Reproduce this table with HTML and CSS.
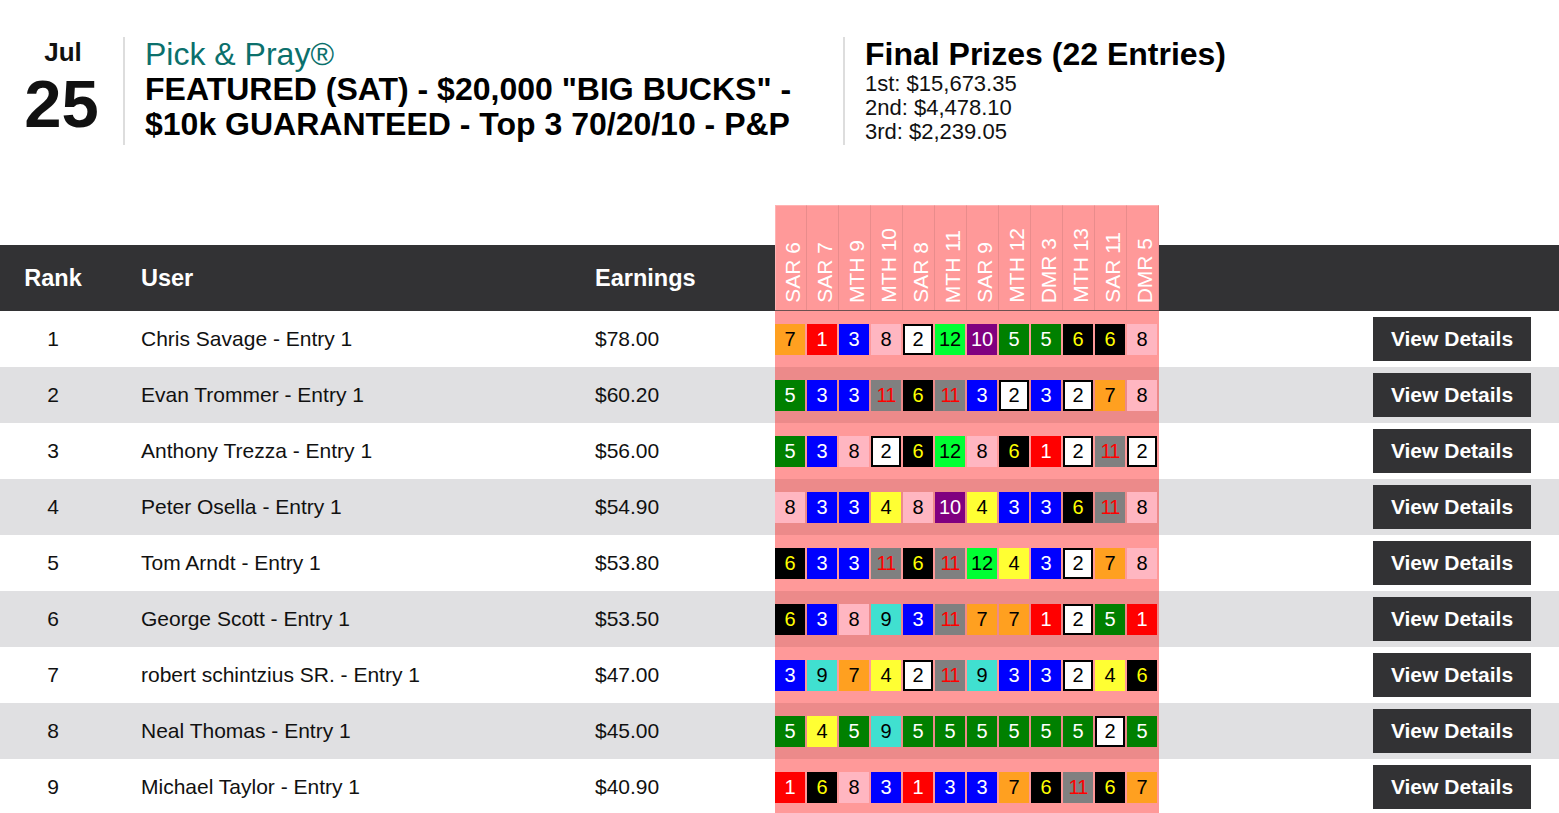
FILE: index.html
```html
<!DOCTYPE html>
<html lang="en">
<head>
<meta charset="utf-8">
<title>Pick &amp; Pray - Leaderboard</title>
<link rel="stylesheet" href="styles.css">
</head>
<body>
<header class="contest">
  <div class="date">
    <div class="month">Jul</div>
    <div class="day">25</div>
  </div>
  <div class="title-block">
    <div class="brand">Pick &amp; Pray®</div>
    <h1 class="title">FEATURED (SAT) - $20,000 "BIG BUCKS" -<br>$10k GUARANTEED - Top 3 70/20/10 - P&amp;P</h1>
  </div>
  <div class="prizes">
    <h2 class="prizes-title">Final Prizes (22 Entries)</h2>
    <div class="prize">1st: $15,673.35</div>
    <div class="prize">2nd: $4,478.10</div>
    <div class="prize">3rd: $2,239.05</div>
  </div>
</header>

<section class="board">
  <div class="head-row">
    <div class="hcell rank">Rank</div>
    <div class="hcell user">User</div>
    <div class="hcell earn">Earnings</div>
    <div class="races-head">
      <div class="rh"><span>SAR 6</span></div>
      <div class="rh"><span>SAR 7</span></div>
      <div class="rh"><span>MTH 9</span></div>
      <div class="rh"><span>MTH 10</span></div>
      <div class="rh"><span>SAR 8</span></div>
      <div class="rh"><span>MTH 11</span></div>
      <div class="rh"><span>SAR 9</span></div>
      <div class="rh"><span>MTH 12</span></div>
      <div class="rh"><span>DMR 3</span></div>
      <div class="rh"><span>MTH 13</span></div>
      <div class="rh"><span>SAR 11</span></div>
      <div class="rh"><span>DMR 5</span></div>
    </div>
    <div class="hcell action"></div>
  </div>

  <div class="row">
    <div class="cell rank">1</div>
    <div class="cell user">Chris Savage - Entry 1</div>
    <div class="cell earn">$78.00</div>
    <div class="picks"><span class="pp c7">7</span><span class="pp c1">1</span><span class="pp c3">3</span><span class="pp c8">8</span><span class="pp c2">2</span><span class="pp c12">12</span><span class="pp c10">10</span><span class="pp c5">5</span><span class="pp c5">5</span><span class="pp c6">6</span><span class="pp c6">6</span><span class="pp c8">8</span></div>
    <div class="cell action"><button class="btn">View Details</button></div>
  </div>
  <div class="row alt">
    <div class="cell rank">2</div>
    <div class="cell user">Evan Trommer - Entry 1</div>
    <div class="cell earn">$60.20</div>
    <div class="picks"><span class="pp c5">5</span><span class="pp c3">3</span><span class="pp c3">3</span><span class="pp c11">11</span><span class="pp c6">6</span><span class="pp c11">11</span><span class="pp c3">3</span><span class="pp c2">2</span><span class="pp c3">3</span><span class="pp c2">2</span><span class="pp c7">7</span><span class="pp c8">8</span></div>
    <div class="cell action"><button class="btn">View Details</button></div>
  </div>
  <div class="row">
    <div class="cell rank">3</div>
    <div class="cell user">Anthony Trezza - Entry 1</div>
    <div class="cell earn">$56.00</div>
    <div class="picks"><span class="pp c5">5</span><span class="pp c3">3</span><span class="pp c8">8</span><span class="pp c2">2</span><span class="pp c6">6</span><span class="pp c12">12</span><span class="pp c8">8</span><span class="pp c6">6</span><span class="pp c1">1</span><span class="pp c2">2</span><span class="pp c11">11</span><span class="pp c2">2</span></div>
    <div class="cell action"><button class="btn">View Details</button></div>
  </div>
  <div class="row alt">
    <div class="cell rank">4</div>
    <div class="cell user">Peter Osella - Entry 1</div>
    <div class="cell earn">$54.90</div>
    <div class="picks"><span class="pp c8">8</span><span class="pp c3">3</span><span class="pp c3">3</span><span class="pp c4">4</span><span class="pp c8">8</span><span class="pp c10">10</span><span class="pp c4">4</span><span class="pp c3">3</span><span class="pp c3">3</span><span class="pp c6">6</span><span class="pp c11">11</span><span class="pp c8">8</span></div>
    <div class="cell action"><button class="btn">View Details</button></div>
  </div>
  <div class="row">
    <div class="cell rank">5</div>
    <div class="cell user">Tom Arndt - Entry 1</div>
    <div class="cell earn">$53.80</div>
    <div class="picks"><span class="pp c6">6</span><span class="pp c3">3</span><span class="pp c3">3</span><span class="pp c11">11</span><span class="pp c6">6</span><span class="pp c11">11</span><span class="pp c12">12</span><span class="pp c4">4</span><span class="pp c3">3</span><span class="pp c2">2</span><span class="pp c7">7</span><span class="pp c8">8</span></div>
    <div class="cell action"><button class="btn">View Details</button></div>
  </div>
  <div class="row alt">
    <div class="cell rank">6</div>
    <div class="cell user">George Scott - Entry 1</div>
    <div class="cell earn">$53.50</div>
    <div class="picks"><span class="pp c6">6</span><span class="pp c3">3</span><span class="pp c8">8</span><span class="pp c9">9</span><span class="pp c3">3</span><span class="pp c11">11</span><span class="pp c7">7</span><span class="pp c7">7</span><span class="pp c1">1</span><span class="pp c2">2</span><span class="pp c5">5</span><span class="pp c1">1</span></div>
    <div class="cell action"><button class="btn">View Details</button></div>
  </div>
  <div class="row">
    <div class="cell rank">7</div>
    <div class="cell user">robert schintzius SR. - Entry 1</div>
    <div class="cell earn">$47.00</div>
    <div class="picks"><span class="pp c3">3</span><span class="pp c9">9</span><span class="pp c7">7</span><span class="pp c4">4</span><span class="pp c2">2</span><span class="pp c11">11</span><span class="pp c9">9</span><span class="pp c3">3</span><span class="pp c3">3</span><span class="pp c2">2</span><span class="pp c4">4</span><span class="pp c6">6</span></div>
    <div class="cell action"><button class="btn">View Details</button></div>
  </div>
  <div class="row alt">
    <div class="cell rank">8</div>
    <div class="cell user">Neal Thomas - Entry 1</div>
    <div class="cell earn">$45.00</div>
    <div class="picks"><span class="pp c5">5</span><span class="pp c4">4</span><span class="pp c5">5</span><span class="pp c9">9</span><span class="pp c5">5</span><span class="pp c5">5</span><span class="pp c5">5</span><span class="pp c5">5</span><span class="pp c5">5</span><span class="pp c5">5</span><span class="pp c2">2</span><span class="pp c5">5</span></div>
    <div class="cell action"><button class="btn">View Details</button></div>
  </div>
  <div class="row">
    <div class="cell rank">9</div>
    <div class="cell user">Michael Taylor - Entry 1</div>
    <div class="cell earn">$40.90</div>
    <div class="picks"><span class="pp c1">1</span><span class="pp c6">6</span><span class="pp c8">8</span><span class="pp c3">3</span><span class="pp c1">1</span><span class="pp c3">3</span><span class="pp c3">3</span><span class="pp c7">7</span><span class="pp c6">6</span><span class="pp c11">11</span><span class="pp c6">6</span><span class="pp c7">7</span></div>
    <div class="cell action"><button class="btn">View Details</button></div>
  </div>
</section>
</body>
</html>
```
FILE: styles.css
```css
html, body {
  margin: 0;
  padding: 0;
  background: #ffffff;
}

body {
  font-family: "Liberation Sans", Arial, Helvetica, sans-serif;
  color: #111111;
  overflow-x: hidden;
}

/* ---------- contest header ---------- */
.contest {
  display: flex;
  align-items: flex-start;
  padding-top: 37px;
  height: 108px;
  margin-bottom: 60px;
}

.date {
  width: 123px;
  height: 108px;
  border-right: 2px solid #dddddd;
  text-align: center;
  font-weight: bold;
}

.month {
  font-size: 26px;
  line-height: 30px;
  padding-left: 3px;
}

.day {
  font-size: 67px;
  line-height: 67px;
  margin-top: 3px;
}

.title-block {
  width: 698px;
  padding-left: 20px;
}

.brand {
  color: #0b706c;
  font-size: 32px;
  line-height: 35px;
}

.title {
  margin: 0;
  font-size: 32px;
  line-height: 35px;
  font-weight: bold;
  color: #000000;
}

.prizes {
  height: 108px;
  border-left: 2px solid #dddddd;
  padding-left: 20px;
}

.prizes-title {
  margin: 0;
  font-size: 32px;
  line-height: 35px;
  font-weight: bold;
  color: #000000;
}

.prize {
  font-size: 22px;
  line-height: 24px;
}

/* ---------- leaderboard ---------- */
.head-row,
.row {
  display: grid;
  grid-template-columns: 106px 489px 180px 384px 1fr;
}

.head-row {
  height: 106px;
  background: linear-gradient(to bottom, transparent 40px, #323234 40px);
  color: #ffffff;
  font-weight: bold;
  font-size: 23.5px;
}

.hcell {
  align-self: end;
  height: 66px;
  display: flex;
  align-items: center;
}

.hcell.rank {
  justify-content: center;
}

.hcell.user {
  padding-left: 35px;
}

.races-head {
  display: flex;
  background: #ff9999;
  border-bottom: 1px solid #6b5050;
  box-sizing: border-box;
}

.rh {
  width: 32px;
  box-sizing: border-box;
  border-right: 1px solid #e98c8c;
  border-top: 1px solid #ffb3b3;
  display: flex;
  align-items: flex-end;
  justify-content: center;
  padding-bottom: 7px;
  padding-left: 4px;
}

.rh:first-child {
  border-left: 1px solid #ffb3b3;
}

.rh span {
  writing-mode: vertical-rl;
  transform: rotate(180deg);
  font-weight: normal;
  font-size: 21px;
  line-height: 24px;
  white-space: nowrap;
}

.row {
  height: 56px;
  font-size: 21px;
}

.row.alt {
  background: #e0e0e2;
}

.cell {
  display: flex;
  align-items: center;
}

.cell.rank {
  justify-content: center;
}

.cell.user {
  padding-left: 35px;
}

.picks {
  display: flex;
  align-items: center;
  gap: 2px;
  background: #ff9999;
}

.row.alt .picks {
  background: #ec8a8a;
}

.pp {
  width: 30px;
  height: 31px;
  box-sizing: border-box;
  display: flex;
  align-items: center;
  justify-content: center;
  font-size: 20px;
  line-height: 1;
}

.c1 { background: #ff0000; color: #ffffff; }
.c2 { background: #ffffff; color: #000000; border: 2px solid #000000; }
.c3 { background: #0000ff; color: #ffffff; }
.c4 { background: #ffff33; color: #000000; }
.c5 { background: #008000; color: #ffffff; }
.c6 { background: #000000; color: #ffff00; }
.c7 { background: #ffa020; color: #000000; }
.c8 { background: #ffb6c1; color: #000000; }
.c9 { background: #40e0d0; color: #000000; }
.c10 { background: #800080; color: #ffffff; }
.c11 { background: #808080; color: #ff0000; letter-spacing: -1px; }
.c12 { background: #00ff33; color: #000000; }

.cell.action {
  justify-content: flex-end;
  padding-right: 28px;
}

.btn {
  width: 158px;
  height: 44px;
  border: none;
  background: #323234;
  color: #ffffff;
  font-family: "Liberation Sans", Arial, Helvetica, sans-serif;
  font-weight: bold;
  font-size: 21px;
  padding: 0;
  cursor: pointer;
}
```
